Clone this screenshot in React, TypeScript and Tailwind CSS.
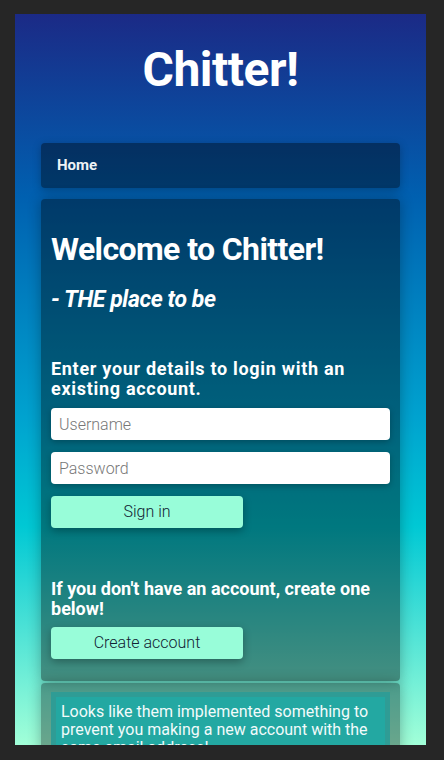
import { useState } from "react";

// Simple login landing page for Chitter
export default function App() {
  const [username, setUsername] = useState("");
  const [password, setPassword] = useState("");

  return (
    <div className="h-[760px] w-[444px] bg-[#262626] pl-[15px] pt-[14px] font-['Roboto',sans-serif]">
      <div className="flex h-[731px] w-[411px] flex-col overflow-hidden bg-[linear-gradient(to_bottom,#1b2a86_0%,#0060b0_25%,#00a2cf_55%,#00c8d4_70%,#a2ffd8_100%)] px-[26px]">
        {/* Page title */}
        <h1 className="mb-[49px] mt-[32px] shrink-0 text-center text-[48px] font-bold leading-[48px] tracking-[-0.5px] text-white">
          Chitter!
        </h1>

        {/* Nav bar */}
        <nav className="flex h-[45px] shrink-0 items-center rounded-[4px] bg-black/40 px-4 shadow-[0_2px_8px_rgba(0,0,0,0.25)]">
          <a className="text-[15px] font-bold text-[#eef2f6]">Home</a>
        </nav>

        {/* Main login card */}
        <div className="mt-[11px] flex shrink-0 flex-col rounded-[4px] bg-black/40 px-[10px] pb-[22px] pt-[32px] text-white shadow-[0_0_14px_rgba(0,0,0,0.3)]">
          <h2 className="text-[32px] font-bold leading-[36px] tracking-[-0.6px]">Welcome to Chitter!</h2>
          <h3 className="mt-[19px] text-[23px] font-bold italic leading-[28px] tracking-[-0.4px]">- THE place to be</h3>

          <p className="mt-[45px] text-[18px] font-bold leading-[20px] tracking-[0.7px]">
            Enter your details to login with an existing account.
          </p>
          <input
            value={username}
            onChange={(e) => setUsername(e.target.value)}
            placeholder="Username"
            className="mt-[9px] h-8 w-full rounded-[4px] bg-white px-2 text-[16px] font-light text-[#333] shadow-[0_2px_6px_rgba(0,0,0,0.25)] outline-none placeholder:text-[#777]"
          />
          <input
            type="password"
            value={password}
            onChange={(e) => setPassword(e.target.value)}
            placeholder="Password"
            className="mt-3 h-8 w-full rounded-[4px] bg-white px-2 text-[16px] font-light text-[#333] shadow-[0_2px_6px_rgba(0,0,0,0.25)] outline-none placeholder:text-[#777]"
          />
          <button className="mt-3 h-8 w-[192px] rounded-[4px] bg-[#98fdd9] text-[16px] font-light text-[#123] shadow-[0_3px_8px_rgba(0,0,0,0.3)]">
            Sign in
          </button>

          <p className="mt-[51px] text-[18px] font-bold leading-[20px]">
            If you don't have an account, create one below!
          </p>
          <button className="mt-2 h-8 w-[192px] rounded-[4px] bg-[#98fdd9] text-[16px] font-light text-[#123] shadow-[0_3px_8px_rgba(0,0,0,0.3)]">
            Create account
          </button>
        </div>

        {/* Notice card */}
        <div className="mt-[2px] shrink-0 rounded-[4px] bg-black/35 px-[10px] pt-[9px] shadow-[0_0_14px_rgba(0,0,0,0.3)]">
          <div className="border-[5px] border-[#2f9c95] bg-[#23a8a2] px-[5px] pb-2 pt-[6px] text-[16px] leading-[18px] text-[#f2fbfb]">
            Looks like them implemented something to prevent you making a new account with the same email address!
          </div>
        </div>
      </div>
    </div>
  );
}
